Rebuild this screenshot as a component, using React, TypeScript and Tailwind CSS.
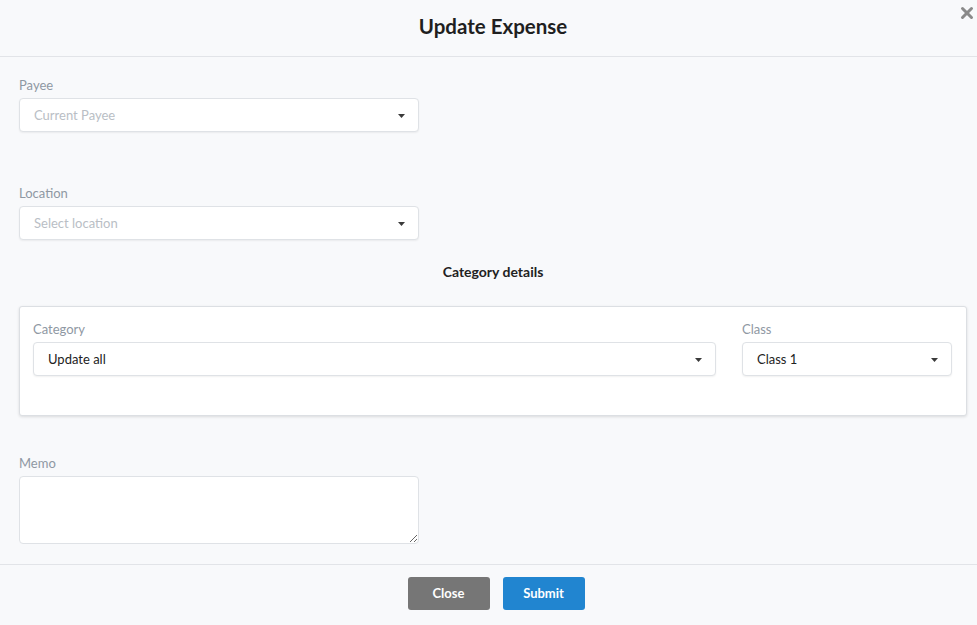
import { X } from 'lucide-react';

function Caret() {
  return (
    <svg width="7" height="4" viewBox="0 0 7 4" className="shrink-0">
      <path d="M0 0 L7 0 L3.5 4 Z" fill="#3a3a3a" />
    </svg>
  );
}

interface SelectProps {
  value?: string;
  placeholder?: string;
  className?: string;
}

function FakeSelect({ value, placeholder, className = '' }: SelectProps) {
  return (
    <div
      className={`h-[34px] flex items-center justify-between pl-[14px] pr-[13px] pt-[2px] bg-white border border-[#dfe2e6] rounded-[4px] shadow-[0_1px_2px_rgba(0,0,0,0.06)] ${className}`}
    >
      <span className={`text-[13px] ${value ? 'text-[#222]' : 'text-[#b9bec5]'}`}>
        {value ?? placeholder}
      </span>
      <Caret />
    </div>
  );
}

function Label({ children }: { children: React.ReactNode }) {
  return <div className="text-[13px] leading-[18px] text-[#8f98a3] mb-[4px]">{children}</div>;
}

export default function App() {
  return (
    <div className="w-[977px] h-[625px] bg-[#f8f9fb] flex flex-col" style={{ fontFamily: 'Lato, "Open Sans", sans-serif' }}>
      <div className="relative h-[57px] shrink-0 border-b border-[#e2e4e8] flex items-center justify-center pr-[10px] pl-[19px]">
        <h1 className="text-[20.5px] font-bold text-[#1f1f1f] -mt-[4px]">Update Expense</h1>
        <button className="absolute right-[1px] top-[4px] text-[#8a8a8a]">
          <X size={18} strokeWidth={4} />
        </button>
      </div>

      <div className="flex-1 pl-[19px] pr-[10px] pt-[19px]">
        <Label>Payee</Label>
        <FakeSelect placeholder="Current Payee" className="w-[400px]" />

        <div className="mt-[52px]">
          <Label>Location</Label>
          <FakeSelect placeholder="Select location" className="w-[400px]" />
        </div>

        <div className="mt-[23px] text-center text-[14px] leading-[18px] font-bold text-[#222]">Category details</div>

        <div className="mt-[25px] h-[110px] bg-white border border-[#dcdfe3] rounded-[3px] shadow-[0_1px_3px_rgba(0,0,0,0.12)] pt-[13px] pl-[13px] pr-[14px] flex gap-[26px]">
          <div className="flex-1">
            <Label>Category</Label>
            <FakeSelect value="Update all" />
          </div>
          <div className="w-[210px]">
            <Label>Class</Label>
            <FakeSelect value="Class 1" />
          </div>
        </div>

        <div className="mt-[38px]">
          <Label>Memo</Label>
          <textarea className="block w-[400px] h-[68px] bg-white border border-[#dfe2e6] rounded-[4px] resize-y outline-none" />
        </div>
      </div>

      <div className="h-[61px] shrink-0 border-t border-[#e2e4e8] flex justify-center gap-[13px] pt-[12px] pl-[25px] pr-[10px]">
        <button className="w-[82px] h-[33px] rounded-[3px] bg-[#767676] text-white text-[13px] font-bold">Close</button>
        <button className="w-[82px] h-[33px] rounded-[3px] bg-[#2185d0] text-white text-[13px] font-bold">Submit</button>
      </div>
    </div>
  );
}
